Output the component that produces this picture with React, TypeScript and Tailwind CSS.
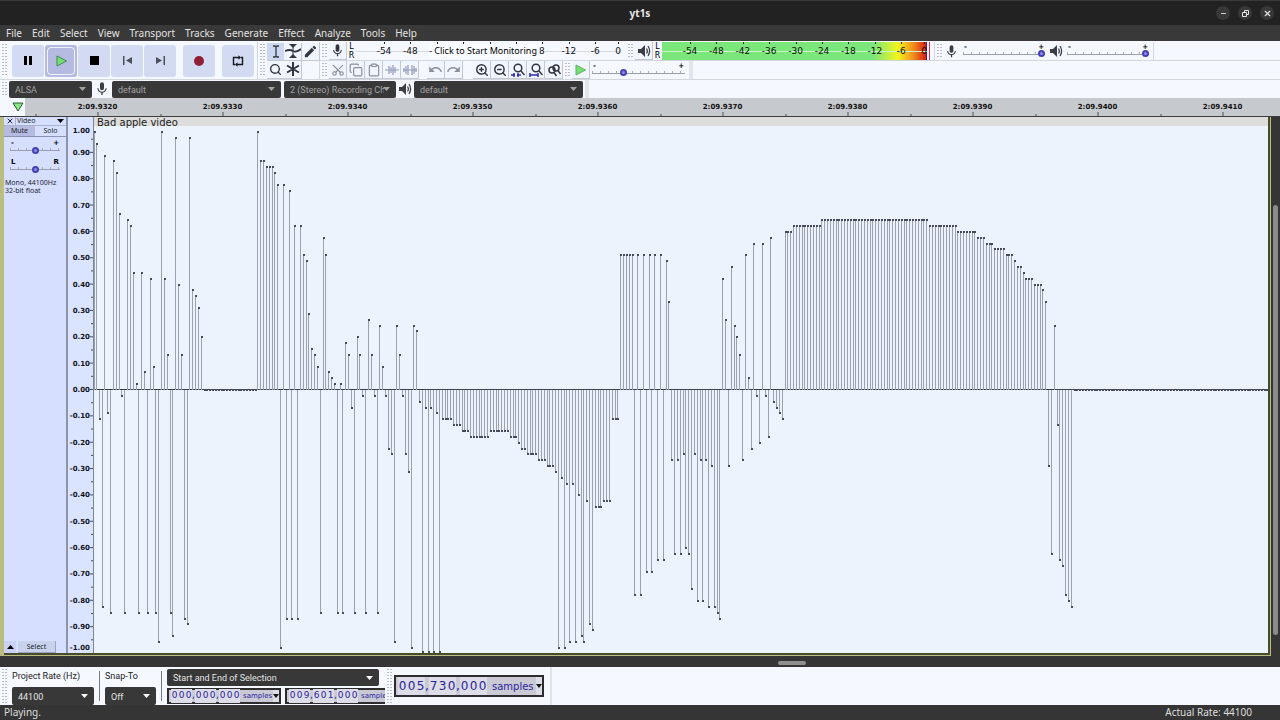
import type { ReactNode } from "react";
import { Clipboard, Copy, Minus, Scissors, Search, X, ZoomIn, ZoomOut } from "lucide-react";
import { MdEdit, MdMic, MdRedo, MdUndo } from "react-icons/md";

const run = (level: number, count: number): number[] => Array<number>(count).fill(level);

// Quantised sample levels, one entry per audio sample
const samples: number[] = [
  44, 42, -5, -37, 40, -4, -38, 39, 37, 30, -1, -38, 29, 28, 20, 1, -38, 20, 3, -38, 19, 4, -38, -43, 44, 19, 6, -38,
  -42, 43, 18, 6, -39, -40, 43, 17, 16, 14, 9,
  ...run(0, 19),
  44, 39, 39, 38, 38, 38, 37, 35, -44, 35, -39, 34, -39, 28, -39, 28, 23, 22, 13, 7, 6, 4, -38, 26, 23, 3, 2, 1, -38,
  1, -38, 8, 6, -3, -38, 9, 6, -1, -38, 12, 6, -1, -38, 11, 4, -1, -10, -11, -43, 11, 6, -1, -11, -14, -44, 11, 10, -2,
  -45, -3, -45, -3, -45, -4, -45,
  ...run(-5, 4),
  ...run(-6, 3),
  ...run(-7, 3),
  ...run(-8, 7),
  ...run(-7, 7),
  ...run(-8, 3),
  -9, -10, -10,
  ...run(-11, 4),
  ...run(-12, 3),
  ...run(-13, 3),
  -14, -44, -15, -44, -16, -43, -16, -43, -18, -42, -43, -19, -40, -41,
  ...run(-20, 3),
  ...run(-19, 3),
  ...run(-5, 3),
  ...run(23, 5),
  -35, 23, -35, 23, -31, 23, -31, 23, -29, 23, -29, 22, 15, -12, -28, -12, -28, -11, -27, -28, -34, -11, -36, -12, -36,
  -12, -37, -13, -37, -38, -39, 19, 12, -13, 21, 11, 9, 6, -12, 23, 2, -10, 25, -1, -9, 25, -1, -8, 26, -2, -3, -4, -5,
  ...run(27, 3),
  ...run(28, 10),
  ...run(29, 38),
  ...run(28, 10),
  ...run(27, 7),
  ...run(26, 3),
  ...run(25, 3),
  ...run(24, 4),
  ...run(23, 3),
  22, 21, 21, 20,
  ...run(19, 3),
  ...run(18, 3),
  17, 15, -13, -28, 11, -6, -29, -30, -35, -36, -37,
  ...run(0, 69),
];

const PLOT_WIDTH = 1174;
const PLOT_HEIGHT = 527;
const ZERO = 264;
const SAMPLE_GAP = 2.834;
const LEVEL = 5.86;

const menus = ["File", "Edit", "Select", "View", "Transport", "Tracks", "Generate", "Effect", "Analyze", "Tools", "Help"];
const times = ["9320", "9330", "9340", "9350", "9360", "9370", "9380", "9390", "9400", "9410"];
const playbackMarks = ["-54", "-48", "-42", "-36", "-30", "-24", "-18", "-12", "-6", "0"];
// The monitoring button covers the middle of the recording scale
const recordingMarks = ["-54", "-48", "", "", "", "", "", "-12", "-6", "0"];
const amplitudes = Array.from({ length: 21 }, (_, i) => (10 - i) / 10);

function Grabber() {
  return (
    <div className="mx-[2px] my-[2px] flex w-[5px] shrink-0 justify-between self-stretch">
      <i className="w-[2px] bg-[repeating-linear-gradient(#b9bec9_0_1px,transparent_1px_3px)]" />
      <i className="w-[2px] bg-[repeating-linear-gradient(#b9bec9_0_1px,transparent_1px_3px)]" />
    </div>
  );
}

function TransportButton({ label, active, children }: { label: string; active?: boolean; children: ReactNode }) {
  return (
    <button
      type="button"
      aria-label={label}
      className={`grid h-8 w-8 place-items-center rounded-[3px] ${active ? "bg-[#b5bae0]" : "bg-[#d2dbf1]"}`}
    >
      {active ? (
        <span className="grid h-7 w-7 place-items-center rounded-[4px] border border-white/80">{children}</span>
      ) : (
        children
      )}
    </button>
  );
}

function ToolButton({
  label,
  active,
  muted,
  children,
}: {
  label: string;
  active?: boolean;
  muted?: boolean;
  children?: ReactNode;
}) {
  return (
    <button
      type="button"
      aria-label={label}
      className={`grid h-[18px] w-[18px] shrink-0 place-items-center border-r border-b border-[#c3c8d2] ${
        active ? "bg-[#ccd7f0]" : "bg-[#f1f5fe]"
      } ${muted ? "text-[#8b8f99]" : "text-[#33363c]"}`}
    >
      {children}
    </button>
  );
}

function Speaker() {
  return (
    <svg width="14" height="14" viewBox="0 0 14 14" className="shrink-0 text-[#3b3e44]" aria-hidden="true">
      <path d="M1 5h3l4-4v12L4 9H1z" fill="currentColor" />
      <path d="M9.5 4.5q1.7 2.5 0 5M11 2q3.2 5 0 10" fill="none" stroke="currentColor" strokeWidth="1.3" />
    </svg>
  );
}

function Slider({ label, value, left = "-", right = "+" }: { label: string; value: number; left?: string; right?: string }) {
  return (
    <label className="block w-full text-[7px] leading-[5px] font-bold text-black">
      <span className="flex justify-between px-[1px]">
        <span>{left}</span>
        <span>{right}</span>
      </span>
      <input
        type="range"
        aria-label={label}
        defaultValue={value}
        className="block h-[8px] w-full appearance-none bg-[linear-gradient(#9a9fad,#9a9fad),repeating-linear-gradient(90deg,#a9aebb_0_1px,transparent_1px_8px)] bg-[length:100%_1px,100%_3px] bg-[position:0_4px,0_2px] bg-no-repeat [&::-webkit-slider-thumb]:h-[7px] [&::-webkit-slider-thumb]:w-[7px] [&::-webkit-slider-thumb]:appearance-none [&::-webkit-slider-thumb]:rounded-full [&::-webkit-slider-thumb]:border-2 [&::-webkit-slider-thumb]:border-[#4540b8] [&::-webkit-slider-thumb]:bg-[#8f8ee0]"
      />
    </label>
  );
}

function Select({ label, value, className, bright }: { label: string; value: string; className: string; bright?: boolean }) {
  return (
    <div className={`relative shrink-0 ${className}`}>
      <select
        aria-label={label}
        className={`block h-full w-full appearance-none overflow-hidden rounded-[2px] bg-[#383838] pt-[1px] pr-3 pl-[6px] text-[9px] leading-[16px] ${
          bright ? "text-[#e4e4e4]" : "text-[#a3a3a3]"
        }`}
      >
        <option>{value}</option>
      </select>
      <svg
        width="7"
        height="4"
        viewBox="0 0 7 4"
        className={`pointer-events-none absolute top-1/2 right-[6px] -translate-y-1/2 ${bright ? "text-white" : "text-[#a3a3a3]"}`}
        aria-hidden="true"
      >
        <path d="M0 0h7L3.500 4z" fill="currentColor" />
      </svg>
    </div>
  );
}

function Meter({ marks, playing, children }: { marks: string[]; playing?: boolean; children?: ReactNode }) {
  return (
    <>
      <div className="flex w-[9px] shrink-0 flex-col justify-center text-center text-[8px] leading-[9px] text-black">
        <span>L</span>
        <span>R</span>
      </div>
      <div className="relative h-[18px] w-[270px] shrink-0">
        <svg width="100%" height="100%" aria-hidden="true">
          {playing && (
            <>
              <defs>
                <linearGradient id="levels">
                  <stop offset="0.80" stopColor="#7be67a" />
                  <stop offset="0.89" stopColor="#f4f51c" />
                  <stop offset="0.95" stopColor="#f08a1c" />
                  <stop offset="1" stopColor="#d51414" />
                </linearGradient>
              </defs>
              <rect width="265" height="18" fill="url(#levels)" />
              <rect x="264" width="1" height="18" fill="#3b2070" />
              <rect x="267" width="1" height="18" fill="#e0304a" />
            </>
          )}
          <path d="M0 9.500H265" stroke={playing ? "#c9f5c9" : "#d5d8df"} />
          {marks.map((mark, i) => {
            const x = mark === "0" ? 262 : 28 + i * 26.4;
            return (
              <g key={i}>
                <path d={`M${Math.round(x)}.5 0v2`} stroke="#222" />
                {mark && (
                  <text x={x} y="12" textAnchor="middle" fontSize="9" fill="#111">
                    {mark}
                  </text>
                )}
              </g>
            );
          })}
        </svg>
        {children}
      </div>
    </>
  );
}

function TimeField({ label, value, large }: { label: string; value: string; large?: boolean }) {
  return (
    <div
      role="group"
      aria-label={label}
      className={`flex shrink-0 items-center border-2 border-[#2d2d30] bg-[#c9cad4] pl-[2px] font-['DejaVu_Sans',sans-serif] text-[#2b22a0] ${
        large ? "h-[22px] w-[150px] text-[12px]" : "h-4 w-[114px] text-[9px]"
      }`}
    >
      {value.split("").map((char, i) => (
        <span
          key={i}
          className={`text-center ${char === "," ? (large ? "w-1" : "w-[3px]") : large ? "w-[9px] bg-[#dcdde6]" : "w-[7px] bg-[#dcdde6]"}`}
        >
          {char}
        </span>
      ))}
      <span className={large ? "ml-[5px] text-[10px]" : "ml-[3px] text-[7px]"}>samples</span>
      <button type="button" aria-label={`${label} format`} className="ml-auto shrink-0 self-stretch bg-[#dcdde6]">
        <svg width="6" height="4" viewBox="0 0 6 4" aria-hidden="true">
          <path d="M0 0h6L3 4z" fill="#111" />
        </svg>
      </button>
    </div>
  );
}

function Timeline() {
  return (
    <div className="flex h-[19px] border-b border-[#3a3d40] bg-[#c6c9cd]">
      <button type="button" aria-label="Pinned play head" className="grid w-[25px] shrink-0 place-items-center bg-[#f5f9ff]">
        <svg width="12" height="10" viewBox="0 0 12 10" className="ml-[10px]" aria-hidden="true">
          <path d="M1 1h10L6 9z" fill="#8ce887" stroke="#2d5c2f" />
        </svg>
      </button>
      <svg className="min-w-0 flex-1" height="18" aria-label="Timeline">
        {times.map((time, i) => {
          const x = 72.5 + i * 125;
          return (
            <g key={time}>
              <text x={`${x / 12.55}%`} y="11" textAnchor="middle" fontSize="7" fontWeight="700" fill="#111">
                2:09.{time}
              </text>
              <rect x={`${x / 12.55}%`} y="14" width="1" height="4" fill="#4b4e52" />
              <rect x={`${(x - 62) / 12.55}%`} y="16" width="1" height="2" fill="#4b4e52" />
            </g>
          );
        })}
      </svg>
    </div>
  );
}

function TrackPanel() {
  return (
    <div className="flex w-16 shrink-0 flex-col border-r-2 border-[#8b94a8] bg-[#d6dfff] font-['Noto_Sans',sans-serif] text-[7px] leading-[8px] text-[#22252e]">
      <div className="flex h-[9px] items-center border-b border-[#aab2cc]">
        <button type="button" aria-label="Close track" className="w-3 border-r border-[#aab2cc] pl-[2px]">
          <X size={8} strokeWidth={3} />
        </button>
        <button type="button" className="flex flex-1 items-center justify-between pr-[2px] pl-[1px]">
          Video
          <svg width="7" height="4" viewBox="0 0 7 4" aria-hidden="true">
            <path d="M0 0h7L3.500 4z" fill="#000" />
          </svg>
        </button>
      </div>
      <div className="grid h-[11px] grid-cols-2 border-b border-[#8b94b0]">
        <button type="button" className="bg-[#b4bae0]">
          Mute
        </button>
        <button type="button">Solo</button>
      </div>
      <div className="flex flex-col gap-[6px] px-[6px] pt-1 font-['DejaVu_Sans',sans-serif]">
        <Slider label="Gain" value={50} />
        <Slider label="Pan" value={50} left="L" right="R" />
      </div>
      <p className="mt-[6px] pl-[1px] whitespace-nowrap">
        Mono, 44100Hz
        <br />
        32-bit float
      </p>
      <div className="mt-auto flex h-3 gap-[2px]">
        <button type="button" aria-label="Collapse" className="grid w-3 place-items-center bg-[#c9d2f2]">
          <svg width="7" height="4" viewBox="0 0 7 4" aria-hidden="true">
            <path d="M0 4h7L3.500 0z" fill="#000" />
          </svg>
        </button>
        <button type="button" className="w-[38px] border-r border-b border-[#9aa3bd] bg-[#c9d2ec]">
          Select
        </button>
      </div>
    </div>
  );
}

function AmplitudeRuler() {
  return (
    <div className="flex w-[26px] shrink-0 flex-col border-r border-[#7d8699] bg-[#dbe4fe] pt-[9px]">
      <svg width="100%" className="min-h-0 flex-1" aria-label="Amplitude">
        {amplitudes.map((value, i) => {
          const y = ((ZERO - 1 - value * 263.5) / PLOT_HEIGHT) * 100;
          const edge = i === 0 ? 7 : i === 20 ? -3 : 3;
          return (
            <g key={value}>
              <text x="22" y={`${y}%`} dy={edge} textAnchor="end" fontSize="7" fontWeight="700" fill="#10131c">
                {value.toFixed(2)}
              </text>
              {i > 0 && i < 20 && <rect x="22" y={`${y}%`} width="3" height="1" fill="#4a4f5c" />}
              {i < 20 && <rect x="23" y={`${y + 2.5}%`} width="2" height="1" fill="#4a4f5c" />}
            </g>
          );
        })}
      </svg>
    </div>
  );
}

function Waveform() {
  return (
    <svg
      className="h-full min-h-0 w-full flex-1"
      viewBox={`0 0 ${PLOT_WIDTH} ${PLOT_HEIGHT}`}
      preserveAspectRatio="none"
      shapeRendering="crispEdges"
      aria-label="Waveform"
    >
      <rect y={ZERO - 1} width={PLOT_WIDTH} height="1" fill="#3d4250" />
      {samples.map((level, i) => {
        const x = Math.max(0, Math.floor(i * SAMPLE_GAP - 0.4));
        const y = Math.min(Math.round(ZERO - level * LEVEL), PLOT_HEIGHT - 1);
        return (
          <g key={i}>
            {level !== 0 && (
              <rect x={x} y={Math.min(y, ZERO)} width="1" height={Math.abs(y - ZERO)} fill="#9aa2af" />
            )}
            <rect x={x} y={y - 1} width="2" height="2" fill="#454b5c" />
          </g>
        );
      })}
    </svg>
  );
}

export default function App() {
  return (
    <div className="flex min-h-screen flex-col overflow-hidden bg-[#353535] font-['DejaVu_Sans',sans-serif]">
      <header className="grid h-[25px] grid-cols-[1fr_auto_1fr] items-center border-t border-[#3a3a3a] bg-[#222] text-[#e8e8e8]">
        <h1 className="col-start-2 font-['Noto_Sans',sans-serif] text-[10px] font-bold">yt1s</h1>
        <div className="flex justify-end gap-2 pr-[6px]">
          <button type="button" aria-label="Minimize" className="grid h-[14px] w-[14px] place-items-center rounded-full bg-[#383838]">
            <Minus size={7} strokeWidth={3} />
          </button>
          <button type="button" aria-label="Restore" className="grid h-[14px] w-[14px] place-items-center rounded-full bg-[#383838]">
            <svg width="7" height="7" viewBox="0 0 7 7" fill="none" stroke="currentColor" aria-hidden="true">
              <path d="M.5 2.500h4v4h-4zM2.500 2V.5h4v4H5" />
            </svg>
          </button>
          <button type="button" aria-label="Close" className="grid h-[14px] w-[14px] place-items-center rounded-full bg-[#383838]">
            <X size={9} strokeWidth={3} />
          </button>
        </div>
      </header>

      <nav className="flex h-4 items-center gap-[10px] bg-[#393939] pl-[6px] font-['Noto_Sans',sans-serif] text-[10px] leading-4 text-[#e2e2e2]">
        {menus.map((menu) => (
          <button key={menu} type="button">
            {menu}
          </button>
        ))}
      </nav>

      <div className="flex h-[38px] bg-[#f5f9ff] pt-[1px]">
        <div className="flex w-[258px] shrink-0 items-center border-r border-[#d3d7de]">
          <Grabber />
          <div className="ml-[3px] flex gap-[7px]">
            <div className="flex gap-[1px]">
              <TransportButton label="Pause">
                <svg width="8" height="9" viewBox="0 0 8 9" aria-hidden="true">
                  <path d="M0 0h3v9H0zM5 0h3v9H5z" />
                </svg>
              </TransportButton>
              <TransportButton label="Play" active>
                <svg width="11" height="12" viewBox="0 0 11 12" aria-hidden="true">
                  <path d="M1 1v10l9.500-5z" fill="#74e070" stroke="#47845b" />
                </svg>
              </TransportButton>
              <TransportButton label="Stop">
                <svg width="9" height="9" viewBox="0 0 9 9" aria-hidden="true">
                  <path d="M0 0h9v9H0z" />
                </svg>
              </TransportButton>
              <TransportButton label="Skip to start">
                <svg width="9" height="9" viewBox="0 0 9 9" fill="#4b505c" aria-hidden="true">
                  <path d="M0 0h1.500v9H0zM9 1v7L3 4.500z" />
                </svg>
              </TransportButton>
              <TransportButton label="Skip to end">
                <svg width="9" height="9" viewBox="0 0 9 9" fill="#4b505c" aria-hidden="true">
                  <path d="M7.500 0H9v9H7.500zM0 1v7l6-3.500z" />
                </svg>
              </TransportButton>
            </div>
            <TransportButton label="Record">
              <svg width="10" height="10" viewBox="0 0 10 10" aria-hidden="true">
                <circle cx="5" cy="5" r="5" fill="#8f1f35" />
              </svg>
            </TransportButton>
            <TransportButton label="Loop">
              <svg width="12" height="12" viewBox="0 0 12 12" fill="none" stroke="#16181d" strokeWidth="1.400" aria-hidden="true">
                <path d="M3 9.500H1.500v-7H7M9 2.500h1.500v7H5" />
                <path d="M6.500 .2v4.600L9 2.500zM5.500 7.200v4.600L3 9.500z" fill="#16181d" stroke="none" />
              </svg>
            </TransportButton>
          </div>
        </div>

        <div className="flex w-[62px] shrink-0 border-r border-[#d3d7de]">
          <Grabber />
          <div className="grid h-[36px] grid-cols-3 self-center">
            <ToolButton label="Selection" active>
              <svg width="8" height="13" viewBox="0 0 8 13" fill="none" stroke="currentColor" strokeWidth="1.300" aria-hidden="true">
                <path d="M1 1h2l1 1 1-1h2M4 2v9M1 12h2l1-1 1 1h2" />
              </svg>
            </ToolButton>
            <ToolButton label="Envelope">
              <svg width="16" height="14" viewBox="0 0 16 14" fill="currentColor" aria-hidden="true">
                <path d="M4 0h8L8 4zM4 14h8l-4-4z" />
                <path d="M7.500 3h1v8h-1z" />
                <path d="M0 7q5-2 8 0t8-2" fill="none" stroke="currentColor" strokeWidth="1.800" />
              </svg>
            </ToolButton>
            <ToolButton label="Draw">
              <MdEdit size={15} />
            </ToolButton>
            <ToolButton label="Zoom">
              <Search size={13} strokeWidth={2.5} />
            </ToolButton>
            <ToolButton label="Multi">
              <svg width="14" height="14" viewBox="0 0 14 14" stroke="currentColor" strokeWidth="2" aria-hidden="true">
                <path d="M7 0v14M1 3.500l12 7M1 10.500l12-7" />
              </svg>
            </ToolButton>
          </div>
        </div>

        <div className="flex min-w-0 flex-1 flex-col">
          <div className="flex h-[19px] items-center border-b border-[#d3d7de]">
            <Grabber />
            <ToolButton label="Record meter">
              <MdMic size={15} />
            </ToolButton>
            <Meter marks={recordingMarks}>
              <div className="absolute inset-y-[2px] left-[73px] flex items-center bg-[#f8fbff] text-[9px] leading-[14px] text-[#111]">
                <span>-</span>
                <button
                  type="button"
                  className="px-[2px] font-['Noto_Sans',sans-serif] whitespace-nowrap text-black"
                >
                  Click to Start Monitoring
                </button>
                <span>8</span>
              </div>
            </Meter>
            <Grabber />
            <ToolButton label="Playback meter">
              <Speaker />
            </ToolButton>
            <Meter marks={playbackMarks} playing />
            <div className="ml-[2px] flex h-full w-[220px] items-center border-x border-[#d3d7de]">
              <Grabber />
              <MdMic size={15} className="shrink-0 text-[#3b3e44]" />
              <div className="mx-1 w-[83px]">
                <Slider label="Recording volume" value={100} />
              </div>
              <Speaker />
              <div className="mx-1 w-[83px]">
                <Slider label="Playback volume" value={100} />
              </div>
            </div>
          </div>
          <div className="flex h-[18px] items-center">
            <Grabber />
            <ToolButton label="Cut" muted>
              <Scissors size={14} className="-rotate-90" />
            </ToolButton>
            <ToolButton label="Copy" muted>
              <Copy size={14} />
            </ToolButton>
            <ToolButton label="Paste" muted>
              <Clipboard size={14} />
            </ToolButton>
            <ToolButton label="Trim" muted>
              <svg width="14" height="10" viewBox="0 0 14 10" stroke="#959bb8" strokeWidth="1.200" aria-hidden="true">
                <path d="M0 5h14M4 1v8M6 2v6M8 0v10M10 2v6" />
              </svg>
            </ToolButton>
            <ToolButton label="Silence" muted>
              <svg width="14" height="10" viewBox="0 0 14 10" stroke="#959bb8" strokeWidth="1.200" aria-hidden="true">
                <path d="M0 5h14M1 3v4M3 1v8M5 0v10M9 0v10M11 1v8M13 3v4" />
              </svg>
            </ToolButton>
            <div className="ml-2 flex">
              <ToolButton label="Undo" muted>
                <MdUndo size={15} />
              </ToolButton>
              <ToolButton label="Redo" muted>
                <MdRedo size={15} />
              </ToolButton>
            </div>
            <div className="ml-[10px] flex">
              <ToolButton label="Zoom in">
                <ZoomIn size={14} strokeWidth={2.5} />
              </ToolButton>
              <ToolButton label="Zoom out">
                <ZoomOut size={14} strokeWidth={2.5} />
              </ToolButton>
              <ToolButton label="Fit selection">
                <svg width="14" height="14" viewBox="0 0 14 14" fill="none" stroke="currentColor" strokeWidth="1.500" aria-hidden="true">
                  <circle cx="7" cy="5" r="3.800" />
                  <path d="M10 8l3.500 4" />
                  <path d="M0 12h4M6 12h4M3 10v4M7 10v4" stroke="#2d2bb0" />
                </svg>
              </ToolButton>
              <ToolButton label="Fit project">
                <svg width="14" height="14" viewBox="0 0 14 14" fill="none" stroke="currentColor" strokeWidth="1.500" aria-hidden="true">
                  <circle cx="7" cy="5" r="3.800" />
                  <path d="M10 8l3.500 4" />
                  <path d="M1 12h8M1 10v4M9 10v4" stroke="#2d2bb0" />
                </svg>
              </ToolButton>
              <ToolButton label="Zoom toggle">
                <svg width="14" height="14" viewBox="0 0 14 14" fill="none" stroke="currentColor" strokeWidth="1.500" aria-hidden="true">
                  <circle cx="9" cy="5" r="3" />
                  <circle cx="5" cy="7" r="3" />
                  <path d="M11 7.500l2.500 3.500M7 9.500l2.500 3.500" />
                </svg>
              </ToolButton>
            </div>
            <Grabber />
            <ToolButton label="Play at speed">
              <svg width="11" height="12" viewBox="0 0 11 12" aria-hidden="true">
                <path d="M1 1v10l9.500-5z" fill="#74e070" stroke="#5fae68" />
              </svg>
            </ToolButton>
            <div className="ml-[2px] flex h-full w-[101px] items-center border-r-4 border-[#e2e5ea] pr-1">
              <Slider label="Playback speed" value={33} />
            </div>
          </div>
        </div>
      </div>

      <div className="flex h-[19px] items-center border-t border-[#d3d7de] bg-[#f5f9ff] font-[Roboto,sans-serif]">
        <Grabber />
        <Select label="Audio host" value="ALSA" className="h-[17px] w-[83px]" />
        <MdMic size={16} className="mx-[2px] shrink-0 text-[#3b3e44]" />
        <Select label="Recording device" value="default" className="h-[17px] w-[169px]" />
        <Select label="Recording channels" value="2 (Stereo) Recording Cha" className="ml-[3px] h-[17px] w-[112px]" />
        <div className="mx-[2px]">
          <Speaker />
        </div>
        <Select label="Playback device" value="default" className="h-[17px] w-[169px]" />
        <div className="ml-[2px] h-full w-1 bg-[#e2e5ea]" />
      </div>

      <Timeline />

      <main className="flex flex-1">
        <section className="flex min-w-0 flex-1 border-r border-b border-l-4 border-[#b9be80]">
          <div className="flex min-w-0 flex-1 border-r-2 border-b-2 border-[#474b2c] bg-[#ebf3fd]">
            <TrackPanel />
            <AmplitudeRuler />
            <div className="flex min-w-0 flex-1 flex-col">
              <h2 className="h-[9px] shrink-0 bg-[#dcdddc] pl-[3px] text-[10px] leading-[11px] text-[#222]">
                Bad apple video
              </h2>
              <Waveform />
            </div>
          </div>
        </section>
        <div className="flex w-[9px] flex-col justify-end px-[2px] pb-[21px]">
          <div className="h-[83%] rounded-full bg-[#8a8a8a]" />
        </div>
      </main>

      <div className="grid h-[11px] place-items-center pt-[3px] pl-[303px]">
        <div className="h-1 w-7 rounded-full bg-[#8f8f8f]" />
      </div>

      <div className="flex h-[38px] items-center bg-[#f5f9ff] font-[Roboto,sans-serif] text-[9px] text-[#222]">
        <Grabber />
        <div className="flex h-full w-[376px] shrink-0 gap-[5px] overflow-hidden pl-[3px]">
          <div className="flex w-[82px] shrink-0 flex-col justify-between">
            <span className="pt-[2px] leading-[14px]">Project Rate (Hz)</span>
            <Select label="Project Rate (Hz)" value="44100" className="h-[18px] w-full" bright />
          </div>
          <div className="my-1 w-[1px] shrink-0 bg-[#73777f]" />
          <div className="flex w-[51px] shrink-0 flex-col justify-between">
            <span className="pt-[2px] leading-[14px]">Snap-To</span>
            <Select label="Snap-To" value="Off" className="h-[18px] w-full" bright />
          </div>
          <div className="my-1 w-[1px] shrink-0 bg-[#73777f]" />
          <div className="flex shrink-0 flex-col justify-between pt-[2px] pb-[1px]">
            <Select label="Selection mode" value="Start and End of Selection" className="h-[17px] w-[212px]" bright />
            <div className="flex gap-1">
              <TimeField label="Selection start" value="000,000,000" />
              <TimeField label="Selection end" value="009,601,000" />
            </div>
          </div>
        </div>
        <Grabber />
        <TimeField label="Audio position" value="005,730,000" large />
        <div className="ml-[6px] h-full w-[2px] bg-[#dfe3ea]" />
      </div>

      <footer className="flex h-[15px] items-center justify-between pr-7 pl-1 font-['Noto_Sans',sans-serif] text-[10px] leading-[15px] text-[#dedede]">
        <span>Playing.</span>
        <span>Actual Rate: 44100</span>
      </footer>
    </div>
  );
}
